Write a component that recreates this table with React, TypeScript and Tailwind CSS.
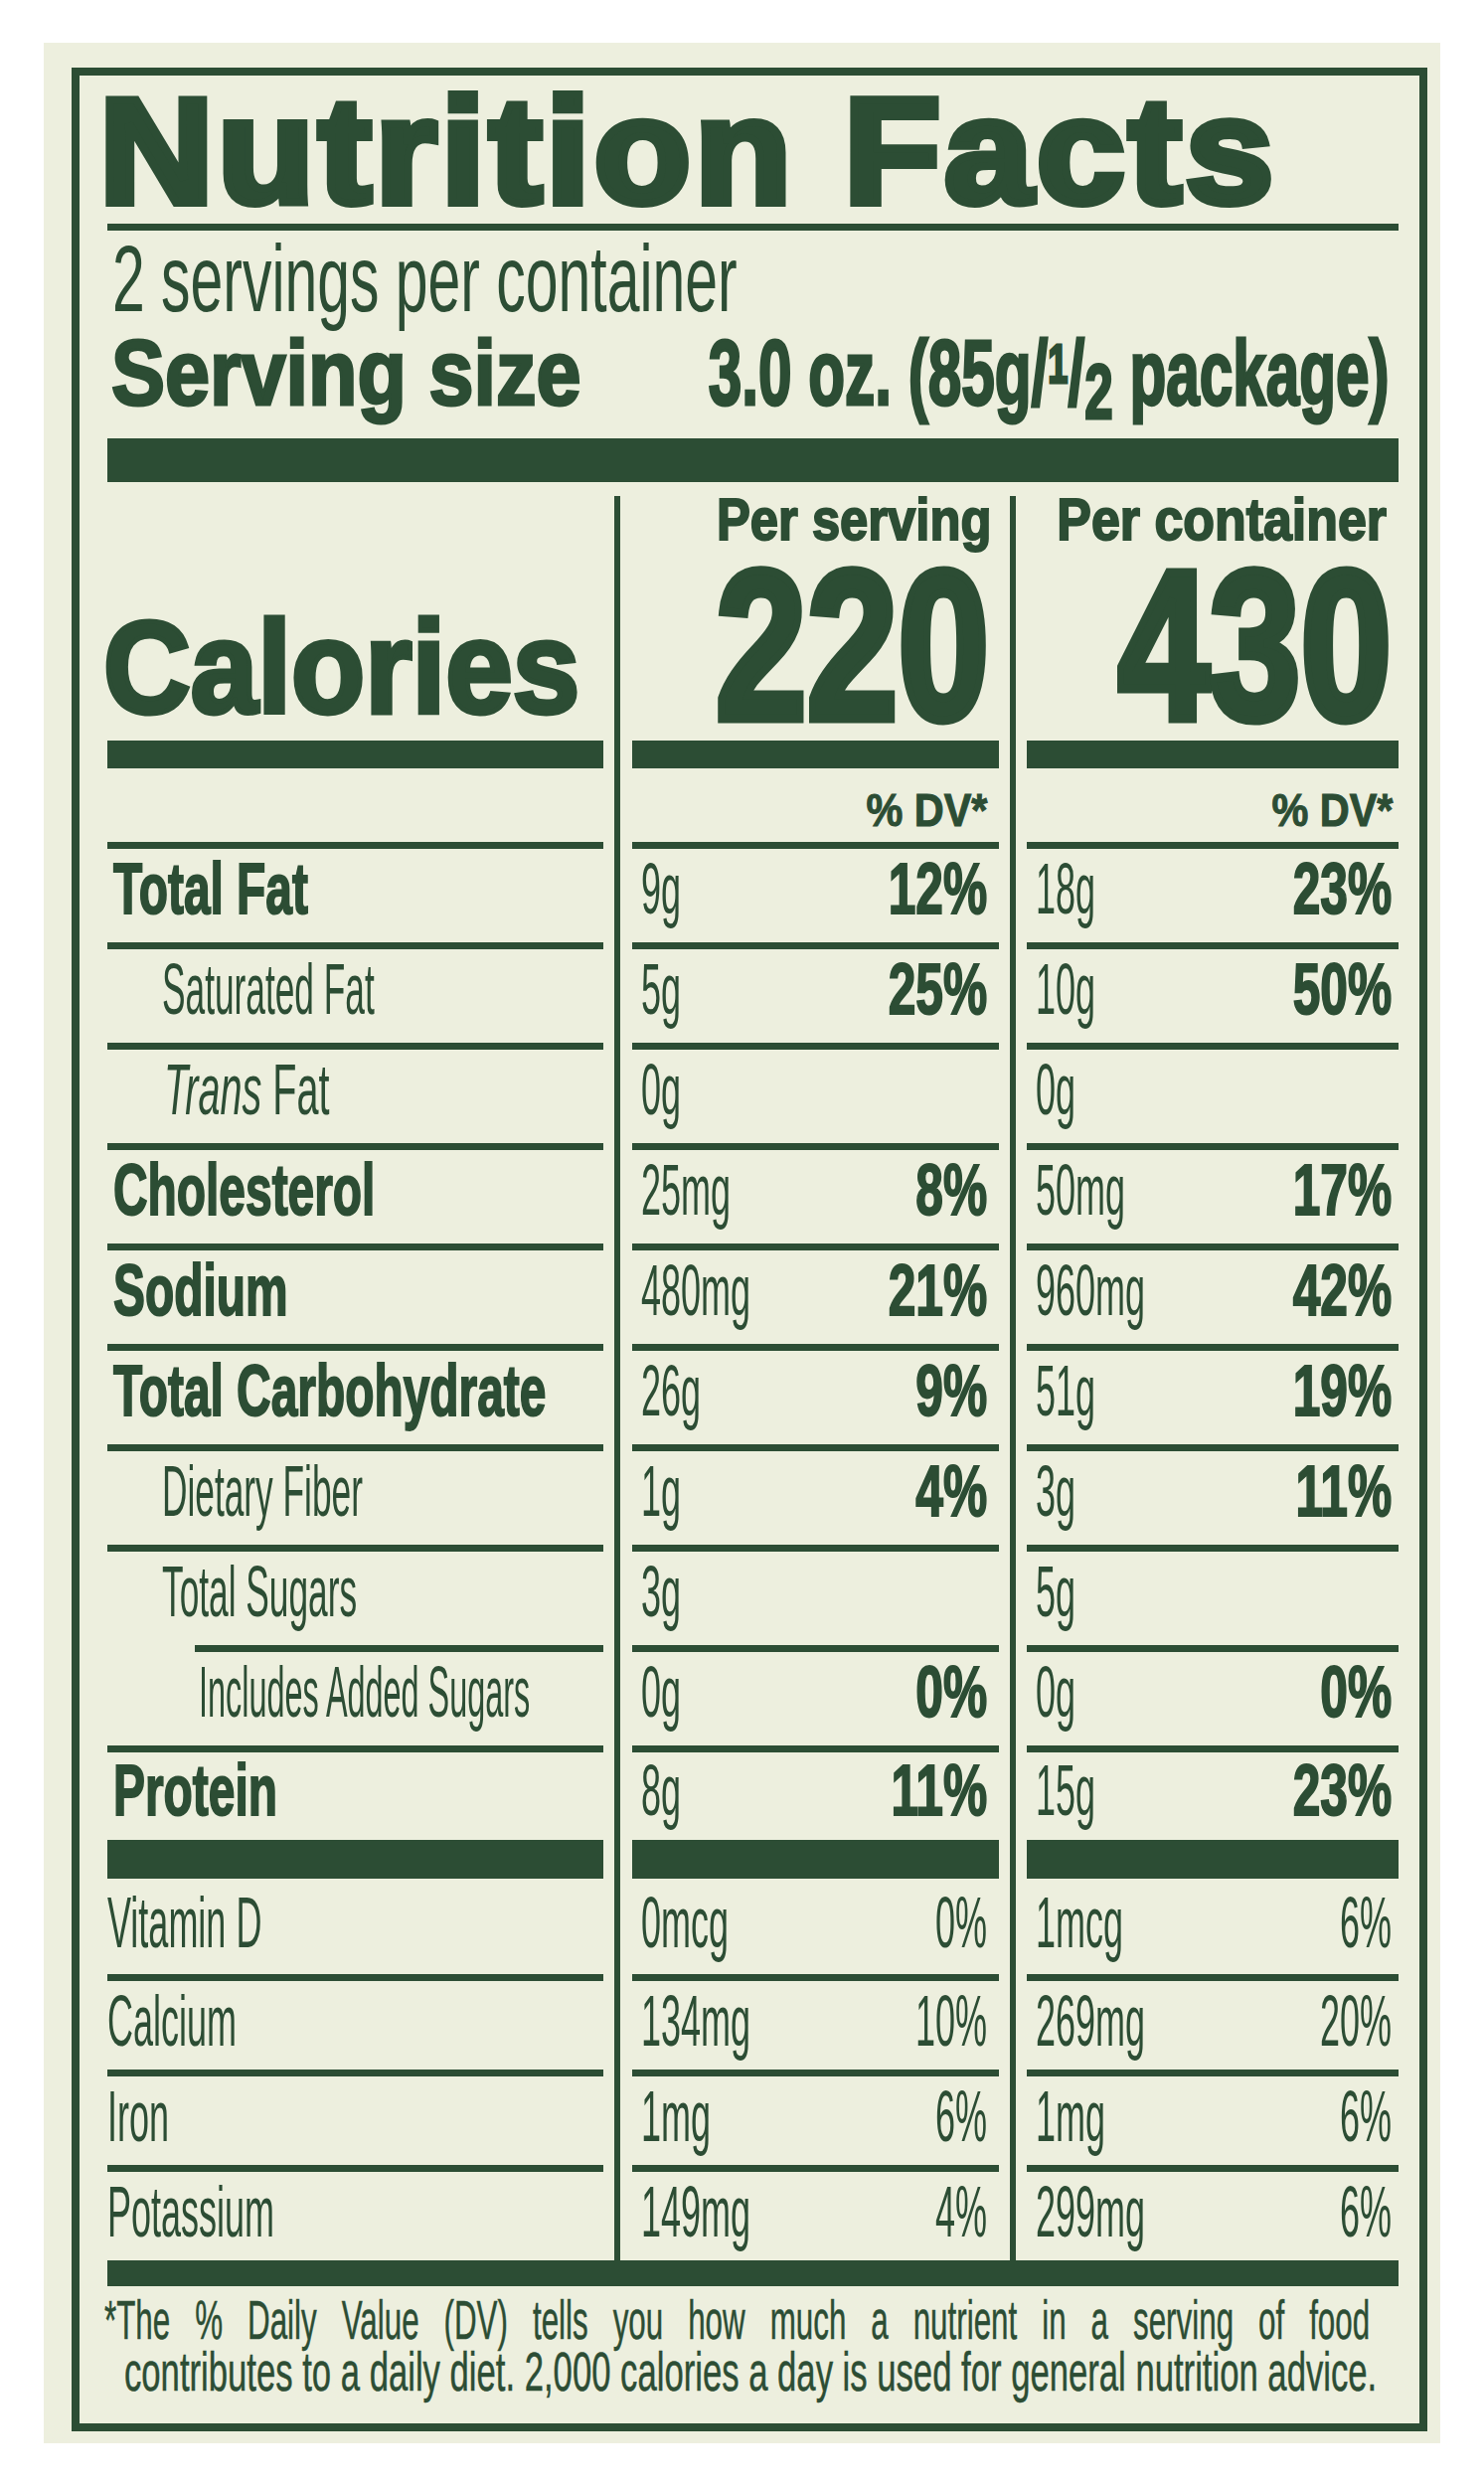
import type { ReactNode } from 'react';

type Cell = { amt: string; dv?: string };

type Kind = 'main' | 'sub' | 'trans' | 'added' | 'vit';

type Row = {
  label: ReactNode;
  kind: Kind;
  per: Cell;
  cont: Cell;
  box: string;
  pad: string;
};

const ROW = 'h-[101px] border-t-[7px]';

const rows: Row[] = [
  { label: 'Total Fat', kind: 'main', per: { amt: '9g', dv: '12%' }, cont: { amt: '18g', dv: '23%' }, box: ROW, pad: 'pt-[4px]' },
  { label: 'Saturated Fat', kind: 'sub', per: { amt: '5g', dv: '25%' }, cont: { amt: '10g', dv: '50%' }, box: ROW, pad: 'pt-[4px]' },
  { label: <><i>Trans</i> Fat</>, kind: 'trans', per: { amt: '0g' }, cont: { amt: '0g' }, box: ROW, pad: 'pt-[4px]' },
  { label: 'Cholesterol', kind: 'main', per: { amt: '25mg', dv: '8%' }, cont: { amt: '50mg', dv: '17%' }, box: ROW, pad: 'pt-[4px]' },
  { label: 'Sodium', kind: 'main', per: { amt: '480mg', dv: '21%' }, cont: { amt: '960mg', dv: '42%' }, box: ROW, pad: 'pt-[4px]' },
  { label: 'Total Carbohydrate', kind: 'main', per: { amt: '26g', dv: '9%' }, cont: { amt: '51g', dv: '19%' }, box: ROW, pad: 'pt-[4px]' },
  { label: 'Dietary Fiber', kind: 'sub', per: { amt: '1g', dv: '4%' }, cont: { amt: '3g', dv: '11%' }, box: ROW, pad: 'pt-[4px]' },
  { label: 'Total Sugars', kind: 'sub', per: { amt: '3g' }, cont: { amt: '5g' }, box: ROW, pad: 'pt-[4px]' },
  { label: 'Includes Added Sugars', kind: 'added', per: { amt: '0g', dv: '0%' }, cont: { amt: '0g', dv: '0%' }, box: ROW, pad: 'pt-[4px]' },
  { label: 'Protein', kind: 'main', per: { amt: '8g', dv: '11%' }, cont: { amt: '15g', dv: '23%' }, box: 'h-[95px] border-t-[7px]', pad: 'pt-[2px]' },
  { label: 'Vitamin D', kind: 'vit', per: { amt: '0mcg', dv: '0%' }, cont: { amt: '1mcg', dv: '6%' }, box: 'h-[135px] border-t-[39px]', pad: 'pt-[8px]' },
  { label: 'Calcium', kind: 'vit', per: { amt: '134mg', dv: '10%' }, cont: { amt: '269mg', dv: '20%' }, box: 'h-[96px] border-t-[7px]', pad: 'pt-[4px]' },
  { label: 'Iron', kind: 'vit', per: { amt: '1mg', dv: '6%' }, cont: { amt: '1mg', dv: '6%' }, box: 'h-[96px] border-t-[7px]', pad: 'pt-[4px]' },
  { label: 'Potassium', kind: 'vit', per: { amt: '149mg', dv: '4%' }, cont: { amt: '299mg', dv: '6%' }, box: 'h-[96px] border-t-[7px]', pad: 'pt-[4px]' },
];

const labelStyle: Record<Kind, { cell: string; text: string }> = {
  main: { cell: 'pl-[6px]', text: 'font-bold scale-x-[0.665] [-webkit-text-stroke:2px_#2c4d34]' },
  sub: { cell: 'pl-[55px]', text: 'scale-x-[0.49]' },
  trans: { cell: 'pl-[57px]', text: 'scale-x-[0.55]' },
  added: { cell: 'ml-[88px] pl-[4px]', text: 'scale-x-[0.45]' },
  vit: { cell: 'pl-0', text: 'scale-x-[0.5]' },
};

// condensed type: Liberation Sans squeezed sideways
function Sq({ className, children }: { className: string; children: ReactNode }) {
  return <span className={`inline-block whitespace-nowrap ${className}`}>{children}</span>;
}

function LabelColumn() {
  return (
    <div className="w-[499px] shrink-0">
      <div className="h-[246px] pt-[107px] text-[132px] leading-none font-bold">
        <Sq className="-ml-[4px] origin-left scale-x-[0.92] [-webkit-text-stroke:5px_#2c4d34]">Calories</Sq>
      </div>
      <div className="h-[28px] bg-[#2c4d34]" />
      <div className="h-[74px]" />
      {rows.map((r, i) => (
        <div
          key={i}
          className={`${r.box} ${r.pad} ${labelStyle[r.kind].cell} border-[#2c4d34] text-[72px] leading-none`}
        >
          <Sq className={`origin-left ${labelStyle[r.kind].text}`}>{r.label}</Sq>
        </div>
      ))}
    </div>
  );
}

function ValueColumn({ which }: { which: 'per' | 'cont' }) {
  const per = which === 'per';
  const pad = per ? 'pl-[9px] pr-[12px]' : 'pl-[9px] pr-[7px]';

  return (
    <div
      className={`ml-[11px] shrink-0 border-l-[6px] border-[#2c4d34] ${per ? 'w-[387px] pl-[12px]' : 'w-[391px] pl-[11px]'}`}
    >
      <div className="h-[246px] flex flex-col">
        <div className={`h-[48px] flex justify-end text-[59px] leading-[48px] font-bold ${per ? 'pr-[8px]' : 'pr-[12px]'}`}>
          <Sq className={`origin-right [-webkit-text-stroke:2px_#2c4d34] ${per ? 'scale-x-[0.86]' : 'scale-x-[0.88]'}`}>
            {per ? 'Per serving' : 'Per container'}
          </Sq>
        </div>
        <div className={`mt-[17px] h-[170px] flex justify-end text-[214px] leading-[170px] font-bold ${per ? 'pr-[10px]' : 'pr-[7px]'}`}>
          <Sq className="origin-right scale-x-[0.77] [-webkit-text-stroke:9px_#2c4d34]">{per ? '220' : '430'}</Sq>
        </div>
      </div>
      <div className="h-[28px] bg-[#2c4d34]" />
      <div className={`h-[74px] pt-[19px] flex justify-end text-[46px] leading-none font-bold ${per ? 'pr-[12px]' : 'pr-[6px]'}`}>
        <Sq className="origin-right scale-x-[0.9] [-webkit-text-stroke:1px_#2c4d34]">% DV*</Sq>
      </div>
      {rows.map((r, i) => {
        const c = per ? r.per : r.cont;
        const bold = r.kind !== 'vit';
        return (
          <div
            key={i}
            className={`${r.box} ${r.pad} ${pad} border-[#2c4d34] flex justify-between items-start text-[72px] leading-none`}
          >
            <Sq className="w-0 origin-left scale-x-[0.5]">{c.amt}</Sq>
            {c.dv && (
              <Sq
                className={`shrink-0 origin-right ${bold ? 'font-bold scale-x-[0.69] [-webkit-text-stroke:2px_#2c4d34]' : 'scale-x-[0.5]'}`}
              >
                {c.dv}
              </Sq>
            )}
          </div>
        );
      })}
    </div>
  );
}

export default function App() {
  return (
    <div className="w-[1493px] h-[2500px] bg-white pt-[43px] pl-[44px] font-['Liberation_Sans',Arial,sans-serif] text-[#2c4d34]">
      <div className="w-[1405px] h-[2415px] bg-[#edefde] pt-[25px] pl-[28px] overflow-hidden">
        <div className="w-[1364px] border-[8px] border-[#2c4d34] pt-[4px] pl-[28px] pr-[21px] pb-[26px]">
          <div className="text-[150px] leading-[145px] font-bold whitespace-nowrap">
            <Sq className="-ml-[8px] origin-left scale-x-[1.06] tracking-[4px] [-webkit-text-stroke:8px_#2c4d34]">
              Nutrition Facts
            </Sq>
          </div>
          <div className="h-[7px] bg-[#2c4d34]" />
          <div className="text-[95px] leading-[96px] whitespace-nowrap">
            <Sq className="ml-[5px] origin-left scale-x-[0.62]">2 servings per container</Sq>
          </div>
          <div className="flex text-[92px] leading-[95px] font-bold">
            <div className="w-[600px] shrink-0 whitespace-nowrap">
              <Sq className="ml-[4px] origin-left scale-x-[0.88] [-webkit-text-stroke:3px_#2c4d34]">Serving size</Sq>
            </div>
            <div className="flex-1 min-w-0 flex justify-end pr-[9px]">
              <Sq className="origin-right scale-x-[0.655] [-webkit-text-stroke:3px_#2c4d34]">
                3.0 oz. (85g/
                <span className="text-[0.6em] leading-[0] align-[0.4em]">1</span>/
                <span className="text-[0.85em] leading-[0] align-[-0.18em]">2</span> package)
              </Sq>
            </div>
          </div>
          <div className="mt-[18px] h-[44px] bg-[#2c4d34]" />

          <div className="mt-[14px] flex">
            <LabelColumn />
            <ValueColumn which="per" />
            <ValueColumn which="cont" />
          </div>

          <div className="h-[26px] bg-[#2c4d34]" />
          <div className="mt-[8px] text-[56px] leading-[52px]">
            <div className="h-[52px] -ml-[3px] whitespace-nowrap">
              <Sq className="origin-left scale-x-[0.56] [word-spacing:29px] [-webkit-text-stroke:0.5px_#2c4d34]">
                *The % Daily Value (DV) tells you how much a nutrient in a serving of food
              </Sq>
            </div>
            <div className="h-[52px] ml-[17px] whitespace-nowrap">
              <Sq className="origin-left scale-x-[0.619] [-webkit-text-stroke:0.5px_#2c4d34]">
                contributes to a daily diet. 2,000 calories a day is used for general nutrition advice.
              </Sq>
            </div>
          </div>
        </div>
      </div>
    </div>
  );
}
